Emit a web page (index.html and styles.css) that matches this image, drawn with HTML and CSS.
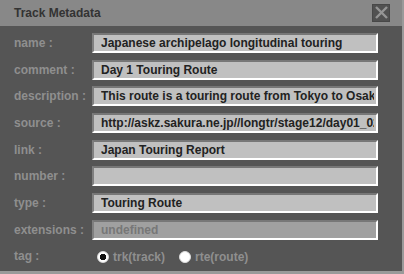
FILE: index.html
```html
<!DOCTYPE html>
<html>
<head>
  <title>Track Metadata</title>
  <link rel="stylesheet" href="styles.css">
</head>
<body>
  <div class="dialog">
    <div class="titlebar">
      <span class="title">Track Metadata</span>
      <button class="close" type="button" title="Close">
        <svg width="15" height="15" viewBox="0 0 15 15">
          <path d="M2 2 L13 13 M13 2 L2 13" stroke="#959595" stroke-width="2.4" fill="none"/>
        </svg>
      </button>
    </div>
    <form class="fields" id="meta-form">
      <label for="name">name :</label>
      <input type="text" id="name" value="Japanese archipelago longitudinal touring">

      <label for="comment">comment :</label>
      <input type="text" id="comment" value="Day 1 Touring Route">

      <label for="desc">description :</label>
      <input type="text" id="desc" value="This route is a touring route from Tokyo to Osaka.">

      <label for="source">source :</label>
      <input type="text" id="source" value="http://askz.sakura.ne.jp//longtr/stage12/day01_02.html">

      <label for="link">link :</label>
      <input type="text" id="link" value="Japan Touring Report">

      <label for="number">number :</label>
      <input type="text" id="number" value="">

      <label for="type">type :</label>
      <input type="text" id="type" value="Touring Route">

      <label for="ext">extensions :</label>
      <input type="text" id="ext" class="disabled" value="undefined" disabled>

      <label>tag :</label>
      <div class="tags">
        <label class="radio"><input type="radio" name="tag" value="trk" checked> trk(track)</label>
        <label class="radio"><input type="radio" name="tag" value="rte"> rte(route)</label>
      </div>
    </form>
  </div>
</body>
</html>
```

FILE: styles.css
```css
body {
  margin: 0;
  padding: 0;
  background-color: #555;
  font-family: "Liberation Sans", Arial, sans-serif;
  font-size: 12px;
  font-weight: bold;
}
.dialog {
  width: 402px;
  height: 271px;
  background-color: #555;
  border-right: 2px solid #9a9a9a;
  border-bottom: 3px solid #9a9a9a;
}
.titlebar {
  height: 26px;
  background-color: #888;
  display: flex;
  align-items: center;
  justify-content: space-between;
  padding: 0 12px 0 14px;
}
.title {
  color: #333;
  font-size: 12px;
}
.close {
  width: 18px;
  height: 18px;
  padding: 0;
  margin-top: -1px;
  background-color: #515151;
  border: 1px solid #484848;
  display: flex;
  align-items: center;
  justify-content: center;
  cursor: pointer;
}
.fields {
  display: grid;
  grid-template-columns: 78px 286px;
  grid-auto-rows: 20px;
  row-gap: 6.67px;
  align-items: center;
  padding: 7px 0 0 14px;
  margin: 0;
}
.fields label {
  color: #8f8f8f;
}
.fields input[type=text] {
  box-sizing: border-box;
  width: 286px;
  height: 20px;
  margin: 0;
  padding: 0 2px 0 7px;
  font-family: "Liberation Sans", Arial, sans-serif;
  font-size: 12px;
  font-weight: bold;
  color: #222;
  background-color: #c0c0c0;
  border-top: 2px solid #777;
  border-left: 2px solid #808080;
  border-bottom: 2px solid #fff;
  border-right: 2px solid #fff;
  outline: none;
}
.fields input.disabled {
  background-color: #a0a0a0;
  color: #777;
}
.tags {
  display: flex;
  align-items: center;
  gap: 14px;
  padding: 1px 0 0 5px;
}
.radio {
  display: flex;
  align-items: center;
  gap: 4px;
}
.radio input {
  -webkit-appearance: none;
  appearance: none;
  width: 12px;
  height: 12px;
  margin: 0;
  border-radius: 50%;
  background-color: #fff;
  border: 1px solid #ddd;
}
.radio input:checked {
  background: radial-gradient(circle, #111 0 3px, #fff 3.5px);
}
```
